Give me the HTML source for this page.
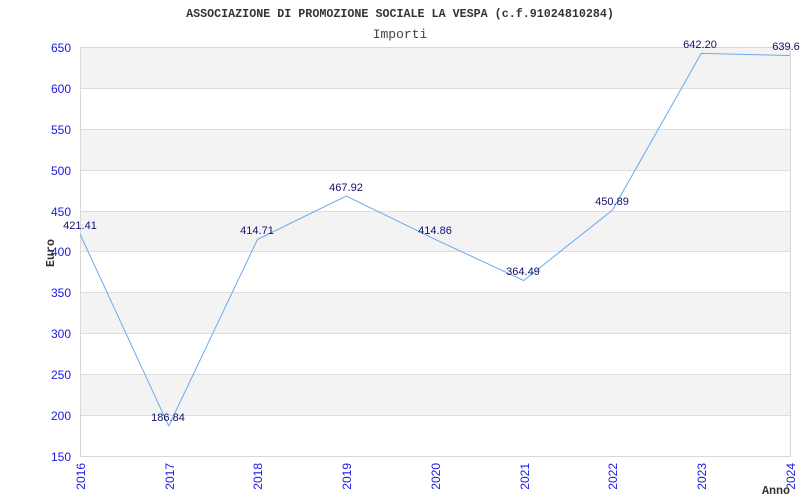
<!DOCTYPE html>
<html><head><meta charset="utf-8"><style>body{margin:0;background:#fff}svg{display:block}</style></head>
<body>
<svg width="800" height="500" xmlns="http://www.w3.org/2000/svg">
<g fill="#f3f3f3">
<rect x="80.5" y="47" width="710" height="41"/>
<rect x="80.5" y="129" width="710" height="41"/>
<rect x="80.5" y="211" width="710" height="41"/>
<rect x="80.5" y="292" width="710" height="41"/>
<rect x="80.5" y="374" width="710" height="41"/>
</g>
<g stroke="#dddddd" stroke-width="1">
<line x1="80.5" y1="88.5" x2="790" y2="88.5"/>
<line x1="80.5" y1="129.5" x2="790" y2="129.5"/>
<line x1="80.5" y1="170.5" x2="790" y2="170.5"/>
<line x1="80.5" y1="211.5" x2="790" y2="211.5"/>
<line x1="80.5" y1="251.5" x2="790" y2="251.5"/>
<line x1="80.5" y1="292.5" x2="790" y2="292.5"/>
<line x1="80.5" y1="333.5" x2="790" y2="333.5"/>
<line x1="80.5" y1="374.5" x2="790" y2="374.5"/>
<line x1="80.5" y1="415.5" x2="790" y2="415.5"/>
</g>
<rect x="80.5" y="47.5" width="710" height="409" fill="none" stroke="#d8d8d8"/>
<text x="400" y="17" text-anchor="middle" font-family="Liberation Mono, monospace" font-weight="bold" font-size="11.7" fill="#333">ASSOCIAZIONE DI PROMOZIONE SOCIALE LA VESPA (c.f.91024810284)</text>
<text x="400" y="38" text-anchor="middle" font-family="Liberation Mono, monospace" font-size="13" fill="#444">Importi</text>
<g font-family="Liberation Sans, sans-serif" font-size="12" fill="#1a1ae0" text-anchor="end">
<text x="71" y="52">650</text><text x="71" y="93">600</text><text x="71" y="134">550</text><text x="71" y="175">500</text><text x="71" y="216">450</text><text x="71" y="256">400</text><text x="71" y="297">350</text><text x="71" y="338">300</text><text x="71" y="379">250</text><text x="71" y="420">200</text><text x="71" y="461">150</text>
</g>
<g font-family="Liberation Sans, sans-serif" font-size="12" fill="#1a1ae0" text-anchor="end">
<text transform="translate(85,463) rotate(-90)">2016</text>
<text transform="translate(174,463) rotate(-90)">2017</text>
<text transform="translate(262,463) rotate(-90)">2018</text>
<text transform="translate(351,463) rotate(-90)">2019</text>
<text transform="translate(440,463) rotate(-90)">2020</text>
<text transform="translate(529,463) rotate(-90)">2021</text>
<text transform="translate(617,463) rotate(-90)">2022</text>
<text transform="translate(706,463) rotate(-90)">2023</text>
<text transform="translate(795,463) rotate(-90)">2024</text>
</g>
<text transform="translate(54,253) rotate(-90)" text-anchor="middle" font-family="Liberation Mono, monospace" font-weight="bold" font-size="11.7" fill="#333">Euro</text>
<text x="762" y="494" font-family="Liberation Mono, monospace" font-weight="bold" font-size="11.7" fill="#333">Anno</text>
<polyline fill="none" stroke="#6aaaf0" stroke-width="1" points="80,234 168.75,426 257.5,239.4 346.25,196 435,239.3 523.75,280.5 612.5,210 701.25,53.4 790,55.5"/>
<g font-family="Liberation Sans, sans-serif" font-size="11" fill="#11116a" text-anchor="middle">
<text x="80" y="229">421.41</text>
<text x="168" y="421">186.84</text>
<text x="257" y="234">414.71</text>
<text x="346" y="191">467.92</text>
<text x="435" y="234">414.86</text>
<text x="523" y="275">364.49</text>
<text x="612" y="205">450.89</text>
<text x="700" y="48">642.20</text>
<text x="786" y="50">639.6</text>
</g>
</svg>
</body></html>
